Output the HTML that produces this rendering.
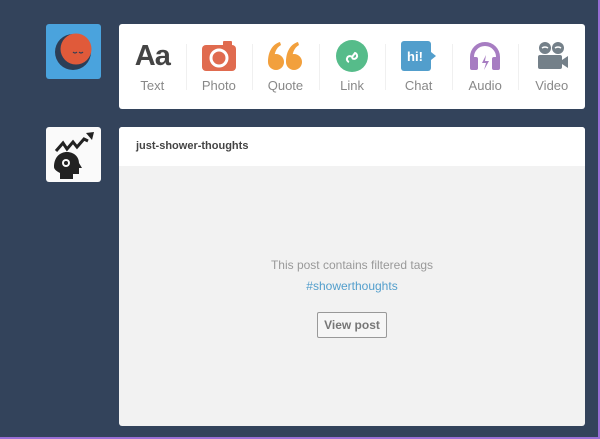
<!DOCTYPE html>
<html><head><style>
*{margin:0;padding:0;box-sizing:border-box}
body{width:600px;height:439px;background:#33435b;font-family:"Liberation Sans",sans-serif;position:relative;overflow:hidden;border-right:2px solid #9b6fd6;border-bottom:2px solid #9b6fd6}
.av{position:absolute;left:46px;width:55px;height:55px;border-radius:3px}
.card{position:absolute;left:119px;width:466px;background:#fff;border-radius:3px}
.items{display:flex;height:85px}
.it{flex:1;position:relative;text-align:center}
.it+.it:before{content:"";position:absolute;left:0;top:20px;height:46px;border-left:1px solid #f0f0f0}
.ic{height:40px;margin-top:12px;display:flex;justify-content:center;align-items:center}
.lb{font-size:13px;color:#888;margin-top:2px}
</style></head><body>
<div class="av" style="top:24px;background:#4aa3dd">
<svg width="55" height="55"><circle cx="27" cy="28" r="18" fill="#2c3e56"/><circle cx="30" cy="25" r="15.5" fill="#e05a3a"/><path d="M27 28q2 2 4 0M33 28q2 2 4 0" stroke="#2c3e56" stroke-width="1.2" fill="none"/></svg></div>
<div class="card" style="top:24px;height:85px">
<div class="items">
<div class="it"><div class="ic" style="font-size:29px;font-weight:bold;color:#444;letter-spacing:-1px">Aa</div><div class="lb">Text</div></div>
<div class="it"><div class="ic"><svg width="34" height="30"><rect x="0" y="4" width="34" height="26" rx="4" fill="#e06b4f"/><rect x="21" y="0" width="9" height="6" rx="1" fill="#e06b4f"/><circle cx="17" cy="17" r="8" fill="none" stroke="#fff" stroke-width="3"/><circle cx="17" cy="17" r="4" fill="#e06b4f"/></svg></div><div class="lb">Photo</div></div>
<div class="it"><div class="ic"><svg width="36" height="30"><circle cx="9" cy="21" r="8" fill="#f2a03d"/><circle cx="27" cy="21" r="8" fill="#f2a03d"/><path d="M1 21C1 10 6 3 13 1l1 3C9 7 7 12 7 21z M19 21C19 10 24 3 31 1l1 3C27 7 25 12 25 21z" fill="#f2a03d"/></svg></div><div class="lb">Quote</div></div>
<div class="it"><div class="ic"><svg width="32" height="32"><circle cx="16" cy="16" r="16" fill="#56bc8a"/><path d="M13 22a3 3 0 1 1 3-5l3-4a3 3 0 1 1-3 5" stroke="#fff" stroke-width="2" fill="none"/></svg></div><div class="lb">Link</div></div>
<div class="it"><div class="ic"><svg width="36" height="30"><rect x="0" y="0" width="30" height="30" rx="3" fill="#529ecc"/><path d="M30 11l5 4-5 4z" fill="#529ecc"/><text x="14" y="20" font-size="13" font-weight="bold" fill="#fff" text-anchor="middle" font-family="Liberation Sans">hi!</text></svg></div><div class="lb">Chat</div></div>
<div class="it"><div class="ic"><svg width="34" height="30"><path d="M4 22v-6a13 13 0 0 1 26 0v6" stroke="#a77dc2" stroke-width="4" fill="none"/><rect x="2" y="16" width="8" height="13" rx="2" fill="#a77dc2"/><rect x="24" y="16" width="8" height="13" rx="2" fill="#a77dc2"/><path d="M18 14l-4 8h4l-2 7 5-9h-4z" fill="#a77dc2"/></svg></div><div class="lb">Audio</div></div>
<div class="it"><div class="ic"><svg width="34" height="30"><circle cx="10" cy="7" r="6" fill="#748089"/><circle cx="23" cy="7" r="6" fill="#748089"/><path d="M7 7q3-2 6 0M20 7q3-2 6 0" stroke="#fff" stroke-width="1.5" fill="none"/><rect x="3" y="14" width="24" height="14" rx="2" fill="#748089"/><path d="M27 19l6-4v12l-6-4z" fill="#748089"/></svg></div><div class="lb">Video</div></div>
</div></div>
<div class="av" style="top:127px;background:#fafafa">
<svg width="55" height="55"><path d="M10 24l7-8 4 6 6-7 4 5 7-8 4 2" stroke="#222" stroke-width="3" fill="none"/><path d="M40 6l8-1-2 8z" fill="#222"/><path d="M8 40c0-10 6-15 13-15s12 5 12 11l3 5h-3v6h-6v5H14v-6c-4-2-6-4-6-6z" fill="#222"/><circle cx="20" cy="36" r="4" fill="#fafafa"/><circle cx="20" cy="36" r="2" fill="#222"/></svg></div>
<div class="card" style="top:127px;height:299px;background:#f2f2f2;overflow:hidden">
<div style="background:#fff;height:39px;padding:13px 0 0 17px;font-size:11px;font-weight:bold;color:#444">just-shower-thoughts</div>
<div style="text-align:center;font-size:12px;color:#999;margin-top:92px">This post contains filtered tags</div>
<div style="text-align:center;font-size:12px;color:#529ecc;margin-top:7px">#showerthoughts</div>
<div style="text-align:center;margin-top:19px"><span style="display:inline-block;border:1px solid #999;border-radius:2px;padding:5px 6px;font-size:12px;font-weight:bold;color:#777;background:#f6f6f6">View post</span></div>
</div>
</body></html>
